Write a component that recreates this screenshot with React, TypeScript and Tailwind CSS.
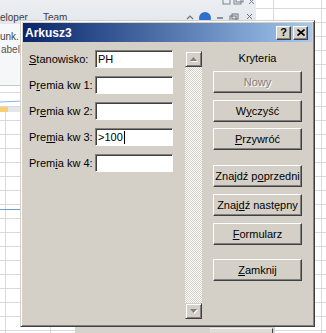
import type { ReactNode } from "react"

const raised =
  "border border-t-white border-l-white border-r-[#404040] border-b-[#404040] shadow-[inset_-1px_-1px_0_#808080]"

const Key = ({ children }: { children: string }) => <u className="underline underline-offset-[1px]">{children}</u>

const Btn = ({ children, className = "", disabled = false }: { children: ReactNode; className?: string; disabled?: boolean }) => (
  <div
    className={`flex h-[22px] w-[89px] items-center justify-center bg-[#d4d0c8] ${raised} ${
      disabled ? "text-[#808080] [text-shadow:1px_1px_0_#ffffff]" : "text-black"
    } ${className}`}
  >
    {children}
  </div>
)

const Field = ({ label, children }: { label: ReactNode; children?: ReactNode }) => (
  <div className="flex h-[18px] items-center">
    <div className="w-[66px] whitespace-nowrap">{label}</div>
    <div className="flex h-[18px] w-[78px] items-center border border-t-[#808080] border-l-[#808080] border-b-white border-r-white bg-white pl-[2px] shadow-[inset_1px_1px_0_#404040]">
      {children}
    </div>
  </div>
)

const ArrowBtn = ({ down = false }: { down?: boolean }) => (
  <div className="flex h-[16px] w-[17px] items-center justify-center border border-t-[#d4d0c8] border-l-[#d4d0c8] border-r-[#404040] border-b-[#404040] bg-[#d4d0c8] shadow-[inset_1px_1px_0_#ffffff,inset_-1px_-1px_0_#808080]">
    <svg width="8" height="5" viewBox="0 0 8 5">
      <polygon points={down ? "1,1 8,1 4.5,5" : "4.5,1 8,5 1,5"} fill="#ffffff" />
      <polygon points={down ? "0,0 7,0 3.5,4" : "3.5,0 7,4 0,4"} fill="#808080" />
    </svg>
  </div>
)

const TitleBtn = ({ children }: { children: ReactNode }) => (
  <div
    className={`flex h-[14px] w-[15px] items-center justify-center bg-[#d4d0c8] ${raised}`}
  >
    {children}
  </div>
)

const VLine = ({ className }: { className: string }) => <div className={`absolute w-px bg-[#d9d9d9] ${className}`} />

export default function App() {
  return (
    <div className="relative h-[333px] w-[326px] overflow-hidden bg-white font-['Liberation_Sans',Arial,sans-serif] text-[11px] text-black">
      {/* sheet grid behind */}
      <div className="absolute inset-0 bg-[linear-gradient(to_bottom,#d9d9d9_1px,transparent_1px)] bg-size-[100%_14px] bg-position-[0_8px]" />
      <VLine className="left-[5px] top-[112px] h-[221px]" />
      <VLine className="left-[50px] top-[320px] h-[13px]" />
      <VLine className="left-[321px] top-0 h-[333px]" />
      <VLine className="left-[273px] top-0 h-[20px]" />

      {/* ribbon */}
      <div className="absolute left-0 top-0 h-[24px] w-[256px] bg-linear-to-b from-[#eceef1] to-[#e3e7ec]">
        <div className="absolute left-0 top-[13px] text-[10px] leading-none text-[#3b3b3b]">eloper</div>
        <div className="absolute left-[43px] top-[13px] text-[10px] leading-none text-[#3b3b3b]">Team</div>
        <svg className="absolute left-[222px] top-0" width="34" height="6" viewBox="0 0 34 6">
          <rect x="1" y="-2" width="7" height="6" fill="none" stroke="#7a8491" />
          <rect x="12" y="-2" width="7" height="6" fill="none" stroke="#7a8491" />
          <rect x="14" y="-4" width="7" height="6" fill="none" stroke="#7a8491" />
          <path d="M27 -1 L32 4 M32 -1 L27 4" stroke="#7a8491" />
        </svg>
        <svg className="absolute left-[186px] top-[12px]" width="70" height="10" viewBox="0 0 70 10">
          <path d="M1 7 L4 4 L7 7" fill="none" stroke="#6a737e" strokeWidth="1.2" />
          <circle cx="19" cy="6" r="6" fill="#2f6fcc" />
          <path d="M31 6 H37" stroke="#6a737e" strokeWidth="1.5" />
          <rect x="44" y="4" width="6" height="5" fill="none" stroke="#6a737e" />
          <rect x="46" y="2" width="6" height="5" fill="none" stroke="#6a737e" />
          <path d="M61 2 L66 7 M66 2 L61 7" stroke="#6a737e" />
        </svg>
      </div>
      <div className="absolute left-0 top-[24px] h-[62px] w-[22px] border-b border-[#c5cad1] bg-[#f6f7f9]">
        <div className="absolute left-0 top-[8px] whitespace-nowrap text-[10px] leading-none text-[#444]">unk. ▾</div>
        <div className="absolute left-[1px] top-[21px] text-[10px] leading-none text-[#555]">abelę</div>
      </div>
      <div className="absolute left-0 top-[101px] h-px w-[22px] -rotate-3 bg-[#8fb4e3]" />
      <div className="absolute left-0 top-[107px] flex h-[5px] w-[22px] bg-[#e3e6ea]">
        <div className="h-full w-[8px] bg-[#f7cf6e]" />
      </div>
      <div className="absolute left-0 top-[209px] h-px w-[22px] bg-[#6f9bd2]" />
      <div className="absolute left-[75px] top-[327px] h-[6px] w-[200px] bg-[#d6d3cc]">
        <div className="absolute left-[135px] top-[1px] h-[5px] w-[63px] border-t border-r border-t-[#f2f1ee] border-r-[#404040] bg-[#dedbd4]" />
      </div>

      {/* dialog */}
      <div className="absolute left-[20px] top-[20px] flex h-[307px] w-[295px] flex-col border border-t-[#d4d0c8] border-l-[#d4d0c8] border-r-[#404040] border-b-[#404040] bg-[#d4d0c8] p-[2px] shadow-[inset_1px_1px_0_#ffffff,inset_-1px_-1px_0_#808080]">
        <div className="flex h-[19px] items-center justify-between bg-linear-to-r from-[#0a246a] to-[#a6caf0] pl-[2px] pr-[4px]">
          <span className="text-[12px] font-bold leading-none text-white">Arkusz3</span>
          <div className="flex gap-[2px]">
            <TitleBtn>
              <span className="text-[11px] font-bold leading-none">?</span>
            </TitleBtn>
            <TitleBtn>
              <svg width="8" height="7" viewBox="0 0 8 7">
                <path d="M0.5 0.5 L7.5 6.5 M7.5 0.5 L0.5 6.5" stroke="#000" strokeWidth="1.6" />
              </svg>
            </TitleBtn>
          </div>
        </div>

        <div className="flex flex-1 pl-[6px] pt-[8px]">
          <div className="flex flex-col gap-[8px]">
            <Field label={<><Key>S</Key>tanowisko:</>}>PH</Field>
            <Field label={<>P<Key>r</Key>emia kw 1:</>} />
            <Field label={<>Pr<Key>e</Key>mia kw 2:</>} />
            <Field label={<>Pre<Key>m</Key>ia kw 3:</>}>
              &gt;100<span className="ml-[1px] inline-block h-[13px] w-px bg-black" />
            </Field>
            <Field label={<>Prem<Key>i</Key>a kw 4:</>} />
          </div>

          <div className="ml-[12px] mt-[1px] flex h-[268px] w-[17px] flex-col">
            <ArrowBtn />
            <div className="flex-1 bg-[repeating-conic-gradient(#ffffff_0_25%,#d4d0c8_0_50%)] bg-size-[2px_2px]" />
            <ArrowBtn down />
          </div>

          <div className="ml-[11px] flex w-[89px] flex-col">
            <div className="mb-[6px] mt-[1px] h-[14px] text-center leading-[14px]">Kryteria</div>
            <Btn disabled>Nowy</Btn>
            <Btn className="mt-[7px]">W<Key>y</Key>czyść</Btn>
            <Btn className="mt-[6px]"><Key>P</Key>rzywróć</Btn>
            <Btn className="mt-[15px]">Znajdź p<Key>o</Key>przedni</Btn>
            <Btn className="mt-[7px]">Znaj<Key>d</Key>ź następny</Btn>
            <Btn className="mt-[7px]"><Key>F</Key>ormularz</Btn>
            <Btn className="mt-[14px]"><Key>Z</Key>amknij</Btn>
          </div>
        </div>
      </div>
    </div>
  )
}
